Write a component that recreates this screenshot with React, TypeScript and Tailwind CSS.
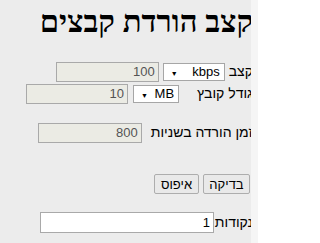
import React from 'react';

function FakeSelect({ value, width }: { value: string; width: string }) {
  return (
    <span className={`relative inline-flex h-[18px] ${width} items-center justify-start border border-[#a6a6a6] bg-white pr-[4px] text-[13px] leading-none text-black`}>
      {value}
      <span className="absolute left-[7px] top-[6px] text-[7px] leading-none">▼</span>
    </span>
  );
}

function ReadOnly({ value, width }: { value: string; width: string }) {
  return (
    <input
      readOnly
      value={value}
      className={`h-[20px] ${width} border border-[#a9a9a9] bg-[#ebebe4] px-[3px] text-right text-[13px] text-[#545454] outline-none`}
    />
  );
}

export default function App() {
  return (
    <div className="flex min-h-[243px] w-[258px] bg-[#f5f5f5]">
      <div
        dir="rtl"
        className="h-[243px] w-[251px] overflow-hidden bg-[#ececec] font-['Liberation_Sans','DejaVu_Sans',Arial,sans-serif] text-[14px] text-black"
      >
        <div className="-mr-[2px] w-[260px]">
          <h1 className="whitespace-nowrap pt-[4px] font-['Liberation_Serif','DejaVu_Serif',serif] text-[31px] font-bold leading-[35px]">
            קצב הורדת קבצים
          </h1>

          <div className="mt-[22px] flex items-center gap-[4px]">
            <span>קצב</span>
            <FakeSelect value="kbps" width="w-[62px]" />
            <ReadOnly value="100" width="w-[103px]" />
          </div>

          <div className="mt-[1px] flex items-center gap-[5px]">
            <span className="pl-[13px]">גודל קובץ</span>
            <FakeSelect value="MB" width="w-[46px]" />
            <ReadOnly value="10" width="w-[102px]" />
          </div>

          <div className="mt-[18px] flex items-center gap-[9px]">
            <span>זמן הורדה בשניות</span>
            <ReadOnly value="800" width="w-[104px]" />
          </div>

          <div className="mt-[31px] flex items-center gap-[4px] pr-[3px]">
            <button className="h-[20px] w-[47px] rounded-[2px] border border-[#adadad] bg-[#e9e9e9] text-[13px] leading-none">
              בדיקה
            </button>
            <button className="h-[20px] w-[45px] rounded-[2px] border border-[#adadad] bg-[#e9e9e9] text-[13px] leading-none">
              איפוס
            </button>
          </div>

          <div className="mt-[18px] flex items-center gap-[1px]">
            <span>נקודות</span>
            <input
              readOnly
              value="1"
              className="h-[21px] w-[174px] border border-[#a9a9a9] bg-white px-[3px] text-right text-[13px] text-black outline-none"
            />
          </div>
        </div>
      </div>
    </div>
  );
}
